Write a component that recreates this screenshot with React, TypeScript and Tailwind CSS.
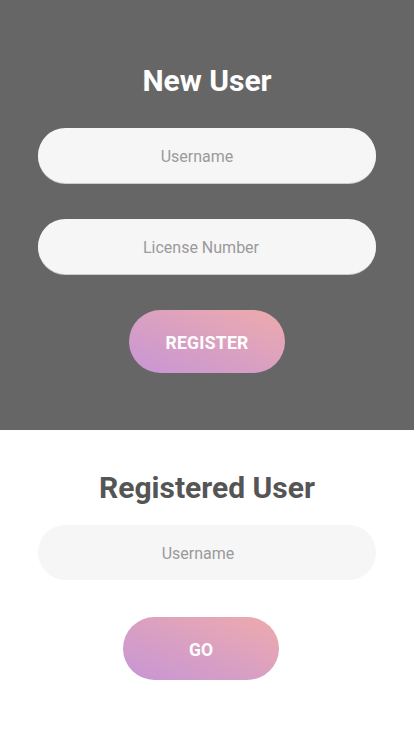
import React from "react";

const font = { fontFamily: "Roboto, 'Liberation Sans', sans-serif" };

export default function App() {
  return (
    <div className="w-[414px] h-[736px] bg-white flex flex-col" style={font}>
      <div className="bg-[#666666] h-[430px] flex flex-col items-center pt-[64px]">
        <h1 className="text-[30px] leading-[34px] font-bold text-white">New User</h1>
        <div className="mt-[30px] w-[338px] h-[55px] rounded-full bg-[#f6f6f6] flex items-center justify-center pr-[20px] pt-[2px] shadow-[0_1px_0_rgba(230,230,230,0.8)]">
          <span className="text-[16px] text-[#9a9a9a]">Username</span>
        </div>
        <div className="mt-[36px] w-[338px] h-[55px] rounded-full bg-[#f6f6f6] flex items-center justify-center pr-[12px] pt-[2px] shadow-[0_1px_0_rgba(230,230,230,0.8)]">
          <span className="text-[16px] text-[#9a9a9a]">License Number</span>
        </div>
        <div className="mt-[36px] w-[156px] h-[63px] rounded-full bg-gradient-to-tr from-[#c795d5] to-[#eeaaab] flex items-center justify-center pt-[3px]">
          <span className="text-[17.5px] font-bold text-white tracking-[0.3px]">REGISTER</span>
        </div>
      </div>
      <div className="flex flex-col items-center pt-[41px]">
        <h2 className="text-[30px] leading-[34px] font-bold text-[#555555]">Registered User</h2>
        <div className="mt-[20px] w-[338px] h-[55px] rounded-full bg-[#f6f6f6] flex items-center justify-center pr-[18px] pt-[2px]">
          <span className="text-[16px] text-[#9a9a9a]">Username</span>
        </div>
        <div className="w-full flex justify-center pr-[12px]">
          <div className="mt-[37px] w-[156px] h-[63px] rounded-full bg-gradient-to-tr from-[#c795d5] to-[#eeaaab] flex items-center justify-center pt-[3px]">
            <span className="text-[17.5px] font-bold text-white">GO</span>
          </div>
        </div>
      </div>
    </div>
  );
}
